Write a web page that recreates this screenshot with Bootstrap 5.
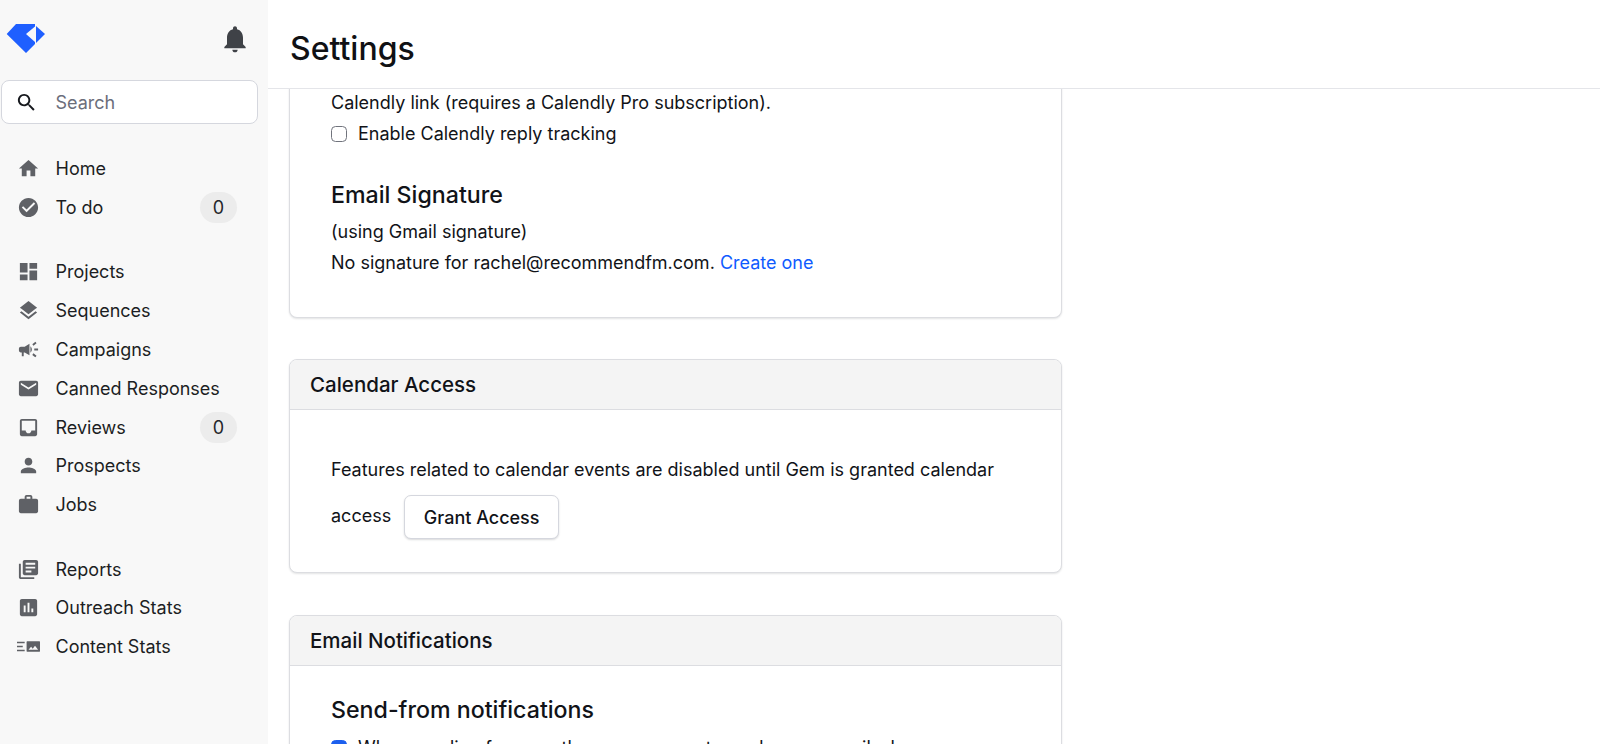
<!DOCTYPE html>
<html lang="en">
<head>
<meta charset="utf-8">
<title>Settings</title>
<link href="https://cdn.jsdelivr.net/npm/bootstrap@5.3.0/dist/css/bootstrap.min.css" rel="stylesheet">
<style>
html,body{height:100%;overflow:hidden}
body{font-family:Inter,"Liberation Sans",sans-serif;font-size:18px;color:#111318;background:#fff}
.shell{height:744px}
.side{width:268px;background:#f8f8f8;flex:none}
.side-top{height:80px;padding:24px 17px 0 6px}
.bell{width:32px;height:32px;fill:#3f4247;margin-top:-1px}
.finder{height:44px;margin:0 10px 0 1px;border:1.5px solid #d5d7de;border-radius:8px;background:#fff;padding-left:13px;gap:17.5px;color:#6b6e7b}
.finder svg{width:23px;height:23px;fill:#16181d;flex:none}
.finder input{border:0;outline:0;background:transparent;font:inherit;color:#6b6e7b;width:170px;padding:0}
.finder input::placeholder{color:#6b6e7b;opacity:1}
.nav-group{margin-top:25.500px}
.nav-first{margin-top:25.500px}
.nav-row{height:38.8px;padding-left:17px;padding-right:31px;color:#1c1e23;text-decoration:none}
.nav-row svg{width:23px;height:23px;fill:#5f6166;flex:none;margin-right:15.5px}
.count{width:37px;height:31px;background:#ececec;border-radius:16px;line-height:31px;text-align:center;color:#24262b}
.top-head{height:89px;border-bottom:1px solid #e4e5e9;padding-left:22px;flex:none}
.top-head h1{font-size:32px;font-weight:500;margin:0;color:#101114;line-height:1;padding-top:33px}
.main{min-width:0}
.scroller{overflow:hidden;flex:1;padding-left:21px}
.pane{width:773px;border:1px solid #dcdde1;border-radius:8px;box-shadow:0 1px 2px rgba(20,22,30,.12);margin-bottom:42px;background:#fff;--bs-card-border-color:#dcdde1}
.pane-cut{border-top:0;border-top-left-radius:0;border-top-right-radius:0;margin-top:-2px;margin-bottom:41px}
.pane-head{height:50px;background:#f4f4f4;border-bottom:1px solid #dcdde1;padding-left:20px;font-size:20.5px;font-weight:500;line-height:50px;color:#111318;border-radius:7px 7px 0 0}
.pane-body{padding-left:41px;padding-right:41px}
.sub-title{font-size:23.2px;font-weight:500;margin:0;color:#111318;line-height:30px}
.line{line-height:31px;margin:0}
.form-check-input{width:16px;height:16px;margin:0 11px 0 0;border-color:#70737c;flex:none;border-radius:3px}
.form-check-input:checked{background-color:#1c5fee;border-color:#1c5fee}
.check-row{line-height:31px}
.blue{color:#0f5bff;text-decoration:none}
.grant{height:44px;width:155px;border:1px solid #d5d7de;border-radius:7px;background:#fff;box-shadow:0 1px 2px rgba(20,22,30,.16);font-weight:500;font-size:18px;color:#111318;padding:0;margin-left:13px}
.cut-body{padding-bottom:39px}
.sig-title{margin-top:31px;margin-bottom:6px}
.calendar-body{padding-top:44px;height:162px}
.access-row{margin-top:10px}
.access-word{margin-bottom:3px}
.notify-body{padding-top:29px;padding-bottom:60px}
.notify-check{margin-top:7px}
</style>
</head>
<body>
<div class="d-flex shell">
  <nav class="side">
    <div class="side-top d-flex justify-content-between align-items-start">
      <svg width="40" height="30" viewBox="0 0 40 30" aria-label="Gem"><path fill="#1f5fff" d="M.7 10 10 0H29V2.500L20 10l9 8v2l-9 9z"/><path fill="#1f5fff" d="M30 2l9 8-9 9z"/></svg>
      <svg class="bell" viewBox="0 0 24 24"><path d="M12 22c1.100 0 2-.9 2-2h-4c0 1.100.9 2 2 2zm6-6v-5c0-3.070-1.640-5.640-4.500-6.320V4c0-.83-.67-1.500-1.500-1.500s-1.500.67-1.500 1.500v.68C7.630 5.360 6 7.920 6 11v5l-2 2v1h16v-1l-2-2z"/></svg>
    </div>
    <div class="finder d-flex align-items-center">
      <svg viewBox="0 0 24 24"><path d="M15.5 14h-.79l-.28-.27C15.41 12.59 16 11.11 16 9.5 16 5.91 13.09 3 9.5 3S3 5.91 3 9.5 5.91 16 9.5 16c1.61 0 3.09-.59 4.23-1.57l.27.28v.79l5 4.99L20.49 19l-4.99-5zm-6 0C7.01 14 5 11.99 5 9.5S7.01 5 9.5 5 14 7.01 14 9.5 11.99 14 9.5 14z"/></svg>
      <input type="text" placeholder="Search">
    </div>
    <div class="nav-first">
      <a class="nav-row d-flex align-items-center" href="#"><svg viewBox="0 0 24 24"><path d="M10 20v-6h4v6h5v-8h3L12 3 2 12h3v8z"/></svg>Home</a>
      <a class="nav-row d-flex align-items-center" href="#"><svg viewBox="0 0 24 24"><path d="M12 2C6.48 2 2 6.48 2 12s4.48 10 10 10 10-4.48 10-10S17.52 2 12 2zm-2 15l-5-5 1.41-1.41L10 14.17l7.59-7.59L19 8l-9 9z"/></svg>To do<span class="count ms-auto">0</span></a>
    </div>
    <div class="nav-group">
      <a class="nav-row d-flex align-items-center" href="#"><svg viewBox="0 0 24 24"><path d="M3 13h8V3H3v10zm0 8h8v-6H3v6zm10 0h8V11h-8v10zm0-18v6h8V3h-8z"/></svg>Projects</a>
      <a class="nav-row d-flex align-items-center" href="#"><svg viewBox="0 0 24 24"><path d="M11.99 18.54l-7.37-5.73L3 14.07l9 7 9-7-1.63-1.27-7.38 5.74zM12 16l7.36-5.73L21 9l-9-7-9 7 1.63 1.27L12 16z"/></svg>Sequences</a>
      <a class="nav-row d-flex align-items-center" href="#"><svg viewBox="0 0 24 24"><path d="M18 11v2h4v-2h-4zm-2 6.61c.96.71 2.21 1.65 3.2 2.39.4-.53.8-1.07 1.2-1.6-.99-.74-2.24-1.68-3.2-2.4-.4.54-.8 1.08-1.2 1.61zM20.4 5.6c-.4-.53-.8-1.07-1.2-1.6-.99.74-2.24 1.68-3.2 2.4.4.53.8 1.07 1.2 1.6.96-.72 2.21-1.65 3.2-2.4zM4 9c-1.1 0-2 .9-2 2v2c0 1.1.9 2 2 2h1v4h2v-4h1l5 3V6L8 9H4zm11.5 3c0-1.33-.58-2.53-1.5-3.35v6.69c.92-.81 1.5-2.01 1.5-3.34z"/></svg>Campaigns</a>
      <a class="nav-row d-flex align-items-center" href="#"><svg viewBox="0 0 24 24"><path d="M20 4H4c-1.1 0-1.99.9-1.99 2L2 18c0 1.1.9 2 2 2h16c1.1 0 2-.9 2-2V6c0-1.1-.9-2-2-2zm0 4l-8 5-8-5V6l8 5 8-5v2z"/></svg>Canned Responses</a>
      <a class="nav-row d-flex align-items-center" href="#"><svg viewBox="0 0 24 24"><path d="M19 3H4.99c-1.11 0-1.98.89-1.98 2L3 19c0 1.1.88 2 1.99 2H19c1.1 0 2-.9 2-2V5c0-1.11-.9-2-2-2zm0 12h-4c0 1.66-1.35 3-3 3s-3-1.34-3-3H4.99V5H19v10z"/></svg>Reviews<span class="count ms-auto">0</span></a>
      <a class="nav-row d-flex align-items-center" href="#"><svg viewBox="0 0 24 24"><path d="M12 12c2.21 0 4-1.79 4-4s-1.79-4-4-4-4 1.79-4 4 1.79 4 4 4zm0 2c-2.67 0-8 1.34-8 4v2h16v-2c0-2.66-5.33-4-8-4z"/></svg>Prospects</a>
      <a class="nav-row d-flex align-items-center" href="#"><svg viewBox="0 0 24 24"><path d="M20 6h-4V4c0-1.11-.89-2-2-2h-4c-1.11 0-2 .89-2 2v2H4c-1.11 0-1.99.89-1.99 2L2 19c0 1.11.89 2 2 2h16c1.11 0 2-.89 2-2V8c0-1.11-.89-2-2-2zm-6 0h-4V4h4v2z"/></svg>Jobs</a>
    </div>
    <div class="nav-group">
      <a class="nav-row d-flex align-items-center" href="#"><svg viewBox="0 0 24 24"><path d="M4 6H2v14c0 1.1.9 2 2 2h14v-2H4V6zm16-4H8c-1.1 0-2 .9-2 2v12c0 1.1.9 2 2 2h12c1.1 0 2-.9 2-2V4c0-1.1-.9-2-2-2zm-1 9H9V9h10v2zm-4 4H9v-2h6v2zm4-8H9V5h10v2z"/></svg>Reports</a>
      <a class="nav-row d-flex align-items-center" href="#"><svg viewBox="0 0 24 24"><path d="M19 3H5c-1.1 0-2 .9-2 2v14c0 1.1.9 2 2 2h14c1.1 0 2-.9 2-2V5c0-1.1-.9-2-2-2zM9 17H7v-7h2v7zm4 0h-2V7h2v10zm4 0h-2v-4h2v4z"/></svg>Outreach Stats</a>
      <a class="nav-row d-flex align-items-center" href="#"><svg viewBox="0 0 24 24"><path fill-rule="evenodd" d="M0 7h8v1.600H0zM0 11.200h6v1.600H0zM0 15.400h8v1.600H0zM10.500 6.500h13a.5.5 0 0 1 .5.5v10a.5.5 0 0 1-.5.5h-13a.5.5 0 0 1-.5-.5V7a.5.5 0 0 1 .5-.5zM12 15.500h10l-3.200-4.200-2.400 3-1.700-2z"/></svg>Content Stats</a>
    </div>
  </nav>
  <main class="main flex-grow-1 d-flex flex-column">
    <header class="top-head"><h1>Settings</h1></header>
    <div class="scroller">
      <section class="card pane pane-cut">
        <div class="pane-body cut-body">
          <p class="line">Calendly link (requires a Calendly Pro subscription).</p>
          <label class="check-row d-flex align-items-center"><input class="form-check-input" type="checkbox">Enable Calendly reply tracking</label>
          <h2 class="sub-title sig-title">Email Signature</h2>
          <p class="line">(using Gmail signature)</p>
          <p class="line">No signature for rachel@recommendfm.com. <a class="blue" href="#">Create one</a></p>
        </div>
      </section>
      <section class="card pane">
        <div class="pane-head">Calendar Access</div>
        <div class="pane-body calendar-body">
          <p class="line">Features related to calendar events are disabled until Gem is granted calendar</p>
          <div class="access-row d-flex align-items-center"><span class="access-word">access</span><button class="btn grant" type="button">Grant Access</button></div>
        </div>
      </section>
      <section class="card pane">
        <div class="pane-head">Email Notifications</div>
        <div class="pane-body notify-body">
          <h2 class="sub-title">Send-from notifications</h2>
          <label class="check-row d-flex align-items-center notify-check"><input class="form-check-input" type="checkbox" checked>When sending from another user account, send me an email when a</label>
        </div>
      </section>
    </div>
  </main>
</div>
</body>
</html>
